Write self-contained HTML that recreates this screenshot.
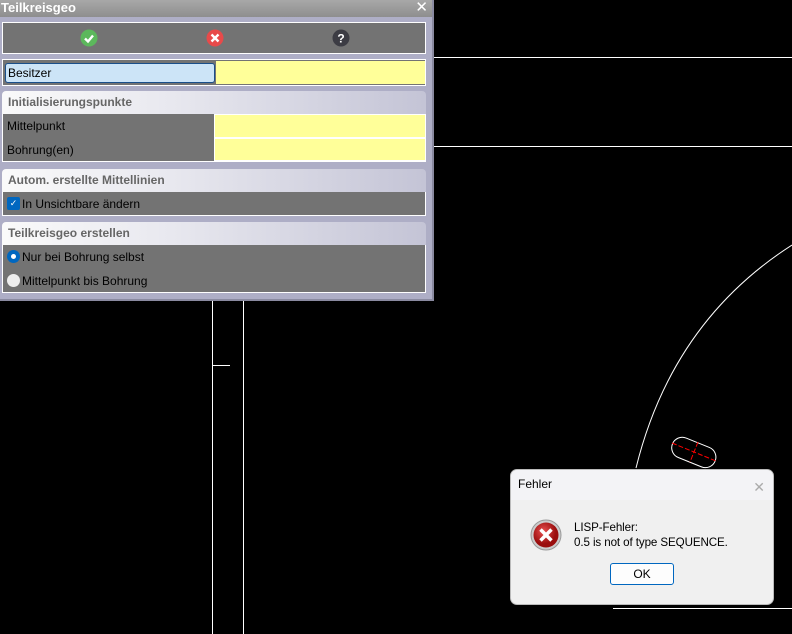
<!DOCTYPE html>
<html><head><style>
*{margin:0;padding:0;box-sizing:border-box}
body{width:792px;height:634px;background:#000;position:relative;overflow:hidden;font-family:"Liberation Sans",sans-serif;font-size:12px}
.abs{position:absolute}
#dlg{left:0;top:0;width:434px;height:301px;background:#aeaec6;border-right:2px solid #8a8aa0;border-bottom:2px solid #8a8aa0}
#title{left:0;top:0;width:432px;height:17px;background:linear-gradient(#a8a8a8,#8e8e8e);color:#fff;font-weight:bold;font-size:13px;line-height:16px;padding-left:1px}
.box{background:#737373;border:1px solid #fff}
.hdr{background:linear-gradient(90deg,#fafafa,#e8e8ef 40%,#c4c4d6);color:#666;font-weight:bold;font-size:12px;line-height:23px;padding-left:6px;border-radius:4px 4px 0 0}
.row{color:#000;font-size:12px;line-height:24px;height:24px;padding-left:6px;position:relative}
.yel{background:#ffff99;border:1px solid #fff}
.ic{position:absolute;left:4px;top:5px;width:13px;height:13px}
</style></head><body>
<svg class="abs" style="left:0;top:0" width="792" height="634">
<g stroke="#fff" stroke-width="1" fill="none">
<line x1="434" y1="57.5" x2="792" y2="57.5"/>
<line x1="434" y1="146.5" x2="792" y2="146.5"/>
<line x1="212.5" y1="301" x2="212.5" y2="634"/>
<line x1="243.5" y1="301" x2="243.5" y2="634"/>
<line x1="212" y1="365.5" x2="230" y2="365.5"/>
<line x1="613" y1="608.5" x2="792" y2="608.5"/>
<path d="M792,245 Q672,322 636,468"/>
<rect x="671" y="442" width="46" height="21" rx="10.5" transform="rotate(22 694 452)"/>
</g>
<g stroke="#f00" stroke-width="1" stroke-dasharray="5 2">
<line x1="672" y1="443" x2="716" y2="461"/>
<line x1="698" y1="442" x2="690" y2="462"/>
</g>
</svg>
<div id="dlg" class="abs">
<div id="title" class="abs">Teilkreisgeo<span style="position:absolute;right:4px;top:0;font-weight:normal;font-size:15px">✕</span></div>
<div class="abs box" style="left:2px;top:22px;width:424px;height:32px">
<svg class="abs" style="left:77px;top:6px" width="18" height="18"><circle cx="9" cy="9" r="8.5" fill="#5cb85c"/><path d="M5 9.5l3 3 5-6" stroke="#fff" stroke-width="2.4" fill="none"/></svg>
<svg class="abs" style="left:203px;top:6px" width="18" height="18"><circle cx="9" cy="9" r="8.5" fill="#e84a4a"/><path d="M5.5 5.5l7 7M12.5 5.5l-7 7" stroke="#fff" stroke-width="2.4"/></svg>
<svg class="abs" style="left:329px;top:6px" width="18" height="18"><circle cx="9" cy="9" r="8.5" fill="#3c3c44"/><text x="9" y="13.5" fill="#fff" font-size="12" font-weight="bold" text-anchor="middle" font-family="Liberation Sans">?</text></svg>
</div>
<div class="abs box" style="left:2px;top:59px;width:424px;height:27px;background:#737373">
<div class="abs" style="left:2px;top:3px;width:210px;height:20px;background:#cce4f7;border:1px solid #1a4f8a;border-radius:3px;line-height:18px;padding-left:2px">Besitzer</div>
<div class="abs" style="left:213px;top:1px;width:209px;height:23px;background:#ffff99"></div>
</div>
<div class="abs" style="left:2px;top:91px;width:424px">
<div class="hdr">Initialisierungspunkte</div>
<div class="box" style="height:48px;border-top:none;position:relative">
<div class="row" style="padding-left:4px">Mittelpunkt</div><div class="row" style="padding-left:4px">Bohrung(en)</div>
<div class="abs yel" style="left:211px;top:0;width:212px;height:24px"></div>
<div class="abs yel" style="left:211px;top:24px;width:212px;height:23px"></div>
</div></div>
<div class="abs" style="left:2px;top:169px;width:424px">
<div class="hdr">Autom. erstellte Mittellinien</div>
<div class="box" style="height:24px;border-top:none"><div class="row" style="padding-left:19px"><span class="ic" style="background:#0067c0;border-radius:2px;color:#fff;font-size:9px;line-height:13px;text-align:center;top:5px">✓</span>In Unsichtbare ändern</div></div>
</div>
<div class="abs" style="left:2px;top:222px;width:424px">
<div class="hdr">Teilkreisgeo erstellen</div>
<div class="box" style="height:48px;border-top:none">
<div class="row" style="padding-left:19px"><span class="ic" style="background:#0067c0;border-radius:50%"><span style="position:absolute;left:4px;top:4px;width:5px;height:5px;background:#fff;border-radius:50%"></span></span>Nur bei Bohrung selbst</div>
<div class="row" style="padding-left:19px"><span class="ic" style="background:#eee;border-radius:50%"></span>Mittelpunkt bis Bohrung</div>
</div></div>
</div>
<div class="abs" style="left:510px;top:469px;width:264px;height:136px;background:#f0f0f0;border:1px solid #bbb;border-radius:7px;overflow:hidden">
<div style="height:30px;background:#f3f3f6;line-height:28px;padding-left:7px;font-size:12px;color:#000">Fehler<span style="position:absolute;right:8px;top:3px;color:#aaa;font-size:14px">✕</span></div>
<svg class="abs" style="left:19px;top:49px" width="32" height="32"><defs><radialGradient id="g" cx="40%" cy="35%"><stop offset="0" stop-color="#e85050"/><stop offset="1" stop-color="#9a0d0d"/></radialGradient></defs><circle cx="16" cy="16" r="15" fill="#ccc" stroke="#999"/><circle cx="16" cy="16" r="12.5" fill="url(#g)"/><path d="M10.5 10.5l11 11M21.5 10.5l-11 11" stroke="#fff" stroke-width="3.5"/></svg>
<div class="abs" style="left:63px;top:50px;font-size:11.6px;line-height:15px;color:#000;letter-spacing:-0.1px">LISP-Fehler:<br>0.5 is not of type SEQUENCE.</div>
<div class="abs" style="left:99px;top:93px;width:64px;height:22px;background:#fdfdfd;border:1px solid #0067c0;border-radius:3px;text-align:center;line-height:20px;font-size:12px">OK</div>
</div>
</body></html>
